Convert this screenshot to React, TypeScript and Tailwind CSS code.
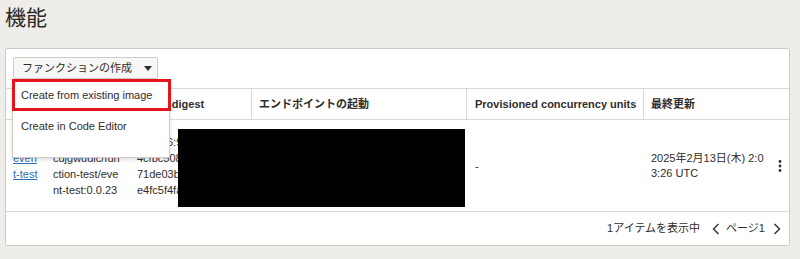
export default function App() {
  return (
    <div
      className="min-h-screen w-full bg-[#efede9] px-[5px] text-[#312d2a]"
      style={{ fontFamily: '"Liberation Sans", "Noto Sans CJK JP", sans-serif' }}
    >
      {/* Title */}
      <div className="h-[48px] pt-[4px] text-[21px] leading-[28px] text-[#2b2825]">機能</div>

      {/* Card */}
      <div className="relative w-[785px] rounded-[2px] border border-[#cfcac3] bg-white">
        {/* Toolbar */}
        <div className="h-[39px] pl-[7px] pt-[8px]">
          <button className="flex h-[22px] w-[145px] items-center rounded-[2px] border border-[#cfcbc6] bg-[#f7f7f6] pl-[8px] text-[11px] text-[#312d2a]">
            <span>ファンクションの作成</span>
            <svg className="ml-[12px]" width="8" height="5" viewBox="0 0 8 5">
              <path d="M0 0h8L4 5z" fill="#312d2a" />
            </svg>
          </button>
        </div>

        {/* Header row */}
        <div className="grid h-[32px] grid-cols-[39px_84px_122px_215px_177px_146px] whitespace-nowrap border-y border-[#dcd8d2] text-[11px] font-bold">
          <div className="flex items-center px-[7px]">名前</div>
          <div className="flex items-center border-l border-[#dcd8d2] px-[7px]">イメージ</div>
          <div className="flex items-center border-l border-[#dcd8d2] px-[7px]">Image digest</div>
          <div className="flex items-center border-l border-[#dcd8d2] px-[7px]">エンドポイントの起動</div>
          <div className="flex items-center border-l border-[#dcd8d2] px-[8px]">Provisioned concurrency units</div>
          <div className="flex items-center border-l border-[#dcd8d2] px-[7px]">最終更新</div>
        </div>

        {/* Body row */}
        <div className="relative grid h-[92px] grid-cols-[39px_84px_122px_215px_177px_128px_18px] border-b border-[#dcd8d2] text-[11px] leading-[16px] text-[#312d2a]">
          <div className="flex flex-col justify-center pl-[7px]">
            <a className="text-[#2a6ebb] underline" href="#">
              even
            </a>
            <a className="text-[#2a6ebb] underline" href="#">
              t-test
            </a>
          </div>
          <div className="flex flex-col justify-center pl-[8px] whitespace-nowrap">
            <div>nrt.ocir.io/ax</div>
            <div>cdjgwudlc/fun</div>
            <div>ction-test/eve</div>
            <div>nt-test:0.0.23</div>
          </div>
          <div className="flex flex-col justify-center overflow-hidden pl-[8px] whitespace-nowrap">
            <div>sha256:9a1e0</div>
            <div>4cfbc508a2</div>
            <div>71de03b6c4</div>
            <div>e4fc5f4fa9</div>
          </div>
          <div />
          <div className="flex items-center pl-[9px]">-</div>
          <div className="flex flex-col justify-center pl-[8px] leading-[15px]">
            <div>2025年2月13日(木) 2:0</div>
            <div>3:26 UTC</div>
          </div>
          <div className="flex items-center justify-center">
            <svg width="4" height="12" viewBox="0 0 4 12">
              <circle cx="2" cy="1.5" r="1.4" fill="#312d2a" />
              <circle cx="2" cy="6" r="1.4" fill="#312d2a" />
              <circle cx="2" cy="10.5" r="1.4" fill="#312d2a" />
            </svg>
          </div>

          {/* redaction */}
          <div className="absolute left-[172px] top-[9px] h-[78px] w-[287px] bg-black" />
        </div>

        {/* Footer */}
        <div className="flex h-[33px] items-center justify-end pr-[8px] text-[11px] text-[#312d2a]">
          <span>1アイテムを表示中</span>
          <svg className="ml-[12px]" width="8" height="12" viewBox="0 0 8 12">
            <path d="M6.5 1L1.5 6l5 5" fill="none" stroke="#312d2a" strokeWidth="1.4" />
          </svg>
          <span className="ml-[6px]">ページ1</span>
          <svg className="ml-[8px]" width="8" height="12" viewBox="0 0 8 12">
            <path d="M1.5 1l5 5-5 5" fill="none" stroke="#312d2a" strokeWidth="1.4" />
          </svg>
        </div>

        {/* Dropdown menu */}
        <div className="absolute left-[6px] top-[30px] h-[79px] w-[158px] border border-[#cfcbc6] bg-white text-[11px] text-[#312d2a] shadow-[0_2px_4px_rgba(0,0,0,0.12)]">
          <div className="-ml-px -mt-px flex h-[32px] w-[159px] items-center border-[3px] border-[#e5141d] pl-[6px]">
            Create from existing image
          </div>
          <div className="flex h-[30px] items-center pl-[8px]">Create in Code Editor</div>
        </div>
      </div>
    </div>
  );
}
